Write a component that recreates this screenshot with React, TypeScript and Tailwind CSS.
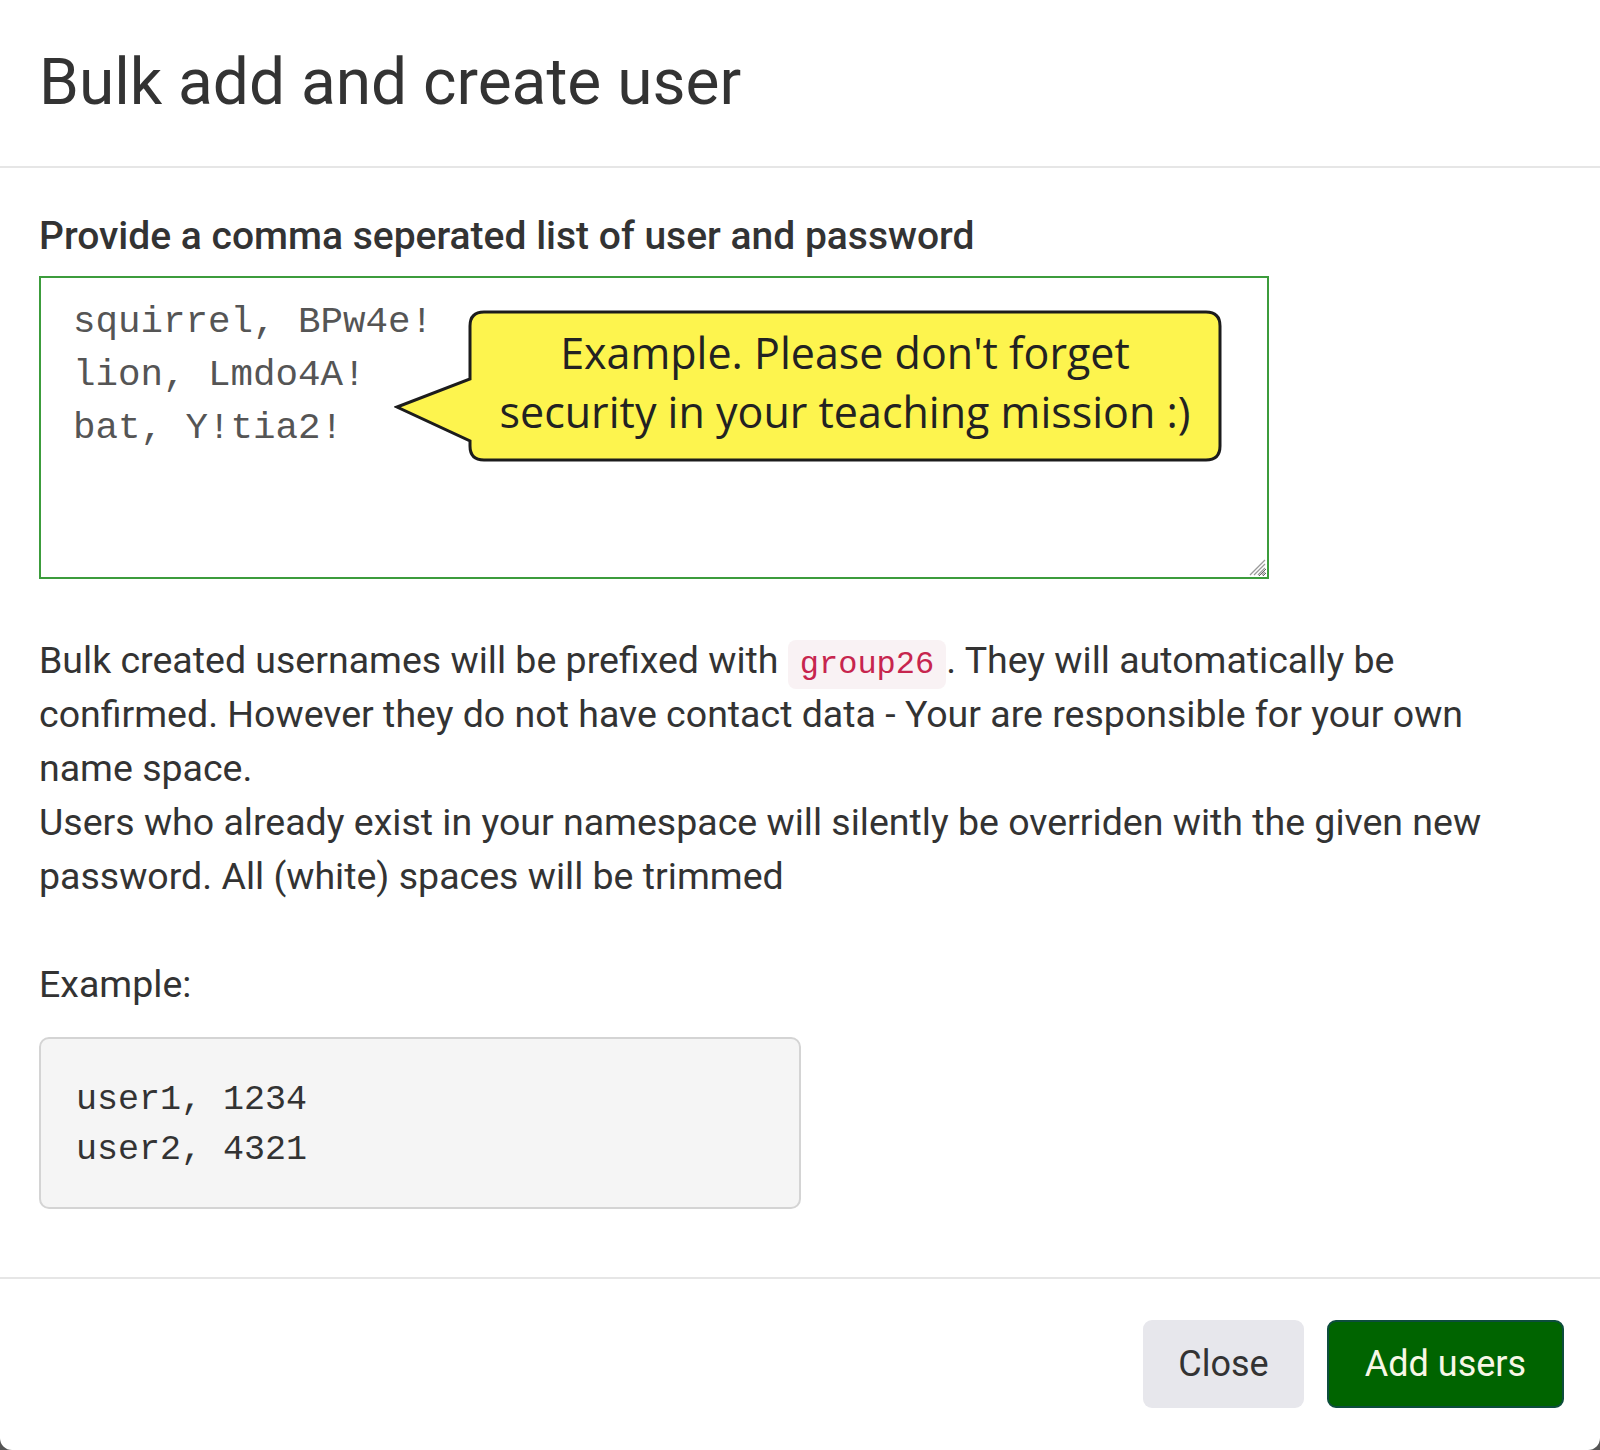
import React from "react";

const SAMPLE = "squirrel, BPw4e!\nlion, Lmdo4A!\nbat, Y!tia2!";

function Bubble() {
  return (
    <>
      <svg
        viewBox="0 0 830 152"
        className="absolute left-[355px] top-[34px] w-[830px] h-[152px] pointer-events-none"
      >
        <path
          d="M90 2 H812 Q826 2 826 16 V136 Q826 150 812 150 H90 Q76 150 76 136 V131 L3 97 L76 69 V16 Q76 2 90 2 Z"
          fill="#fdf44e"
          stroke="#1c1c1c"
          strokeWidth="3"
          strokeLinejoin="miter"
        />
      </svg>
      <div className="absolute left-[431px] top-[36px] w-[750px] h-[148px] pb-[8px] flex flex-col items-center justify-center pointer-events-none font-['Open_Sans',sans-serif] text-[43px] leading-[59px] text-[#222]">
        <span>Example. Please don't forget</span>
        <span>security in your teaching mission :)</span>
      </div>
    </>
  );
}

export default function App() {
  return (
    <div className="w-[1600px] h-[1450px] bg-[#555]">
      <div className="w-full h-full bg-white rounded-b-[12px] flex flex-col font-['Roboto',sans-serif] text-[#333]">
        <div className="h-[168px] shrink-0 border-b-2 border-[#e6e6e6] px-[39px] flex items-center">
          <h2 className="text-[64px] leading-none text-[#333]">Bulk add and create user</h2>
        </div>

        <div className="flex-1 px-[39px] pt-[41px]">
          <label className="block text-[39px] leading-[54px] font-medium text-[#333]">
            Provide a comma seperated list of user and password
          </label>
          <div className="relative mt-[13px] w-[1230px]">
            <textarea
              defaultValue={SAMPLE}
              className="block w-[1230px] h-[303px] border-2 border-[#3c9c3c] pl-[32px] pt-[18px] font-['Liberation_Mono',monospace] text-[37.5px] leading-[53px] text-[#555] outline-none resize-y"
            />
            <Bubble />
            <svg viewBox="0 0 20 20" className="absolute right-[3px] bottom-[3px] w-[20px] h-[20px] pointer-events-none">
              <path d="M19 4 L4 19 M19 8 L8 19 M19 12 L12 19 M19 16 L16 19" stroke="#9a9a9a" strokeWidth="1.3" />
            </svg>
          </div>

          <p className="mt-[54px] w-[1480px] text-[37.5px] leading-[54px] text-[#333]">
            Bulk created usernames will be prefixed with{" "}
            <code className="font-['Liberation_Mono',monospace] text-[32px] leading-none text-[#c7254e] bg-[#f9f2f4] rounded-[8px] px-[12px] py-[6px]">
              group26
            </code>
            . They will automatically be confirmed. However they do not have contact data - Your are responsible for your own name space.
            <br />
            Users who already exist in your namespace will silently be overriden with the given new password. All (white) spaces will be trimmed
          </p>

          <p className="mt-[54px] text-[37.5px] leading-[54px] text-[#333]">Example:</p>

          <pre className="mt-[26px] w-[762px] h-[172px] bg-[#f5f5f5] border-2 border-[#d4d4d4] rounded-[10px] pl-[35px] pt-[36px] font-['Liberation_Mono',monospace] text-[35px] leading-[50px] text-[#333]">
            {"user1, 1234\nuser2, 4321"}
          </pre>
        </div>

        <div className="h-[173px] shrink-0 border-t-2 border-[#e6e6e6] flex items-start justify-end gap-[23px] pr-[36px] pt-[41px]">
          <button className="w-[161px] h-[88px] rounded-[9px] bg-[#e7e7ec] text-[36px] text-[#333]">Close</button>
          <button className="w-[237px] h-[88px] rounded-[9px] bg-[#006400] border-2 border-[#0d4d3d] text-[36px] text-[#f7f7e6]">
            Add users
          </button>
        </div>
      </div>
    </div>
  );
}
